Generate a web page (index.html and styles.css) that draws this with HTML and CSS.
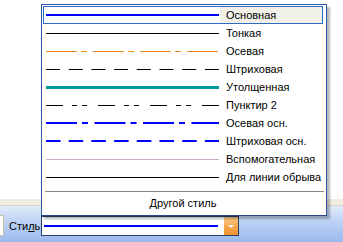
FILE: index.html
```html
<!DOCTYPE html>
<html lang="ru">
<head>
  <meta charset="UTF-8">
  <meta name="viewport" content="width=device-width, initial-scale=1.0">
  <title>Стиль линии</title>
  <link rel="stylesheet" href="styles.css">
</head>
<body>
  <div class="screen">
    <div class="workspace"></div>
    <div class="strip"></div>
    <div class="toolbar">
      <div class="field-stub"></div>
      <label class="tb-label">Сти<u>л</u>ь</label>
      <div class="combo">
        <div class="combo-value">
          <svg width="174" height="4"><line x1="0" y1="2" x2="174" y2="2" stroke="#0000ff" stroke-width="2"/></svg>
        </div>
        <div class="combo-btn"><span class="arrow"></span></div>
      </div>
    </div>

    <div class="popup">
      <div class="row selected">
        <div class="sample"><svg width="173" height="16"><line x1="0" y1="8" x2="173" y2="8" stroke="#0000ff" stroke-width="2"/></svg></div>
        <div class="name">Основная</div>
      </div>
      <div class="row">
        <div class="sample"><svg width="173" height="16"><line x1="0" y1="8.5" x2="173" y2="8.5" stroke="#000" stroke-width="1"/></svg></div>
        <div class="name">Тонкая</div>
      </div>
      <div class="row">
        <div class="sample"><svg width="173" height="16"><line x1="0" y1="8.5" x2="173" y2="8.5" stroke="#ef8a17" stroke-width="1" stroke-dasharray="31 4 6 6"/></svg></div>
        <div class="name">Осевая</div>
      </div>
      <div class="row">
        <div class="sample"><svg width="173" height="16"><line x1="0" y1="8.5" x2="173" y2="8.5" stroke="#000" stroke-width="1" stroke-dasharray="14 8.7"/></svg></div>
        <div class="name">Штриховая</div>
      </div>
      <div class="row">
        <div class="sample"><svg width="173" height="16"><line x1="0" y1="8.5" x2="173" y2="8.5" stroke="#009a99" stroke-width="3"/></svg></div>
        <div class="name">Утолщенная</div>
      </div>
      <div class="row">
        <div class="sample"><svg width="173" height="16"><line x1="0" y1="8.5" x2="173" y2="8.5" stroke="#000" stroke-width="1" stroke-dasharray="17 9 5 5 5 11"/></svg></div>
        <div class="name">Пунктир 2</div>
      </div>
      <div class="row">
        <div class="sample"><svg width="173" height="16"><line x1="0" y1="8" x2="173" y2="8" stroke="#0000ff" stroke-width="2" stroke-dasharray="31 5 6 6.5"/></svg></div>
        <div class="name">Осевая осн.</div>
      </div>
      <div class="row">
        <div class="sample"><svg width="173" height="16"><line x1="0" y1="8" x2="173" y2="8" stroke="#0000ff" stroke-width="2" stroke-dasharray="14.5 8.2"/></svg></div>
        <div class="name">Штриховая осн.</div>
      </div>
      <div class="row">
        <div class="sample"><svg width="173" height="16"><line x1="0" y1="8.5" x2="173" y2="8.5" stroke="#d4a6c6" stroke-width="1"/></svg></div>
        <div class="name">Вспомогательная</div>
      </div>
      <div class="row">
        <div class="sample"><svg width="173" height="16"><line x1="0" y1="8.5" x2="173" y2="8.5" stroke="#000" stroke-width="1"/></svg></div>
        <div class="name">Для линии обрыва</div>
      </div>
      <div class="sep"></div>
      <div class="other">Другой стиль</div>
    </div>
  </div>
</body>
</html>
```

FILE: styles.css
```css
html, body { margin: 0; padding: 0; }
body { font-family: "Liberation Sans", Arial, sans-serif; font-size: 11px; color: #000; background: #fff; }
.screen { position: relative; width: 343px; height: 242px; display: flex; flex-direction: column; overflow: hidden; }
.workspace { flex: 1; background: #fff; }
.strip { height: 6px; background: #efece1; border-bottom: 1px solid #d9d5c6; }
.toolbar { height: 36px; box-sizing: border-box; padding-top: 9px; display: flex; align-items: flex-start; background: linear-gradient(#e3ecfb, #c3d6f5 35%, #98b8ec); }
.field-stub { width: 4px; height: 21px; margin-top: 0; box-sizing: border-box; background: #fff; border: 1px solid #c7c3ad; border-left: none; }
.tb-label { margin-left: 5px; width: 32px; line-height: 22px; }
.tb-label u { text-decoration: underline; }
.combo { display: flex; width: 198px; height: 20px; box-sizing: border-box; margin-top: 1px; border: 1px solid #2b416c; background: #fff; }
.combo-value { width: 176px; padding-left: 2px; display: flex; align-items: center; }
.combo-value svg { display: block; }
.combo-btn { margin: 0 0 0 5px; width: 14px; height: 18px; background: linear-gradient(#fcc98a, #f5a64c 55%, #ef9330); display: flex; align-items: center; justify-content: center; }
.arrow { width: 0; height: 0; border-left: 3px solid transparent; border-right: 3px solid transparent; border-top: 3px solid #fff; margin-top: 1px; }

.popup { position: absolute; left: 41px; top: 4px; width: 286px; height: 212px; box-sizing: border-box; border: 1px solid #2e57a6; border-bottom-color: #27477e; background: #fff; padding: 1px 3px 0 1px; box-shadow: 3px 3px 2px rgba(0, 0, 0, 0.28); }
.row { display: flex; height: 18px; box-sizing: border-box; border: 1px solid transparent; }
.row.selected { border-color: #316ac5; }
.sample { padding-left: 2px; width: 173px; }
.sample svg { display: block; }
.name { flex: 1; margin-left: 1px; padding-left: 6px; line-height: 16px; white-space: nowrap; }
.row.selected .name { background: #f2f1e9; }
.sep { height: 1px; background: #8a8a8a; margin: 5px 0 0 2px; width: 279px; }
.other { height: 22px; line-height: 22px; text-align: center; }
```
